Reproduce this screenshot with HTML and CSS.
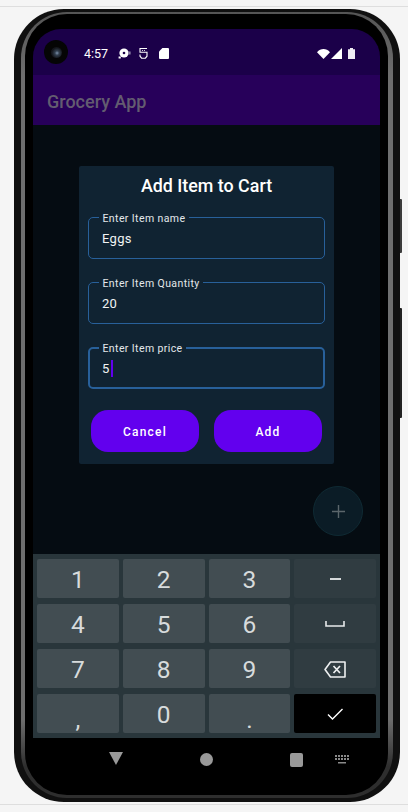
FILE: index.html
```html
<!DOCTYPE html>
<html lang="en">
<head>
    <meta charset="UTF-8">
    <meta name="viewport" content="width=device-width, initial-scale=1.0">
    <title>Grocery App</title>
    <link rel="stylesheet" href="styles.css">
</head>
<body>
    <div class="strip-top"></div>
    <div class="phone">
        <div class="side-btn power"></div>
        <div class="side-btn volume"></div>
        <div class="band">
            <div class="bezel">
                <div class="screen">
                    <div class="status-bar">
                        <div class="camera"><div class="lens"></div></div>
                        <span class="time">4:57</span>
                        <svg class="st-icon icon-bubble" width="13" height="11" viewBox="0 0 13 11"><circle cx="6" cy="5" r="4.6" fill="#fff"/><circle cx="6" cy="5" r="1.3" fill="#1b0049"/><path d="M10 3.5h2.6v3H10z" fill="#8f83a8"/><path d="M0.6 8.4h2.2v2.2H0.6z" fill="#fff"/></svg>
                        <svg class="st-icon icon-sim" width="9" height="12" viewBox="0 0 9 12"><path d="M8 1.5H1v3.7h7v4l-1.6 2H2.6L1 9.2V7.6" fill="none" stroke="#fff" stroke-width="1.1"/><path d="M3.2 3h.8v1h-.8zM5 3h.8v1H5z" fill="#fff"/></svg>
                        <svg class="st-icon icon-sd" width="10" height="11" viewBox="0 0 10 11"><path d="M3.4 0H9a1 1 0 0 1 1 1v9a1 1 0 0 1-1 1H1a1 1 0 0 1-1-1V3.4z" fill="#fff"/></svg>
                        <div class="status-right">
                            <svg width="13" height="10" viewBox="0 0 13 10"><path d="M0 3.2C3.6-1 9.4-1 13 3.2L6.5 10z" fill="#fff"/></svg>
                            <svg class="icon-signal" width="11" height="11" viewBox="0 0 11 11"><path d="M11 0v11H0z" fill="#fff"/></svg>
                            <svg class="icon-battery" width="7" height="11" viewBox="0 0 7 11"><path d="M2 0h3v1.2h2V11H0V1.2h2z" fill="#efedf3"/></svg>
                        </div>
                    </div>
                    <div class="app-bar">Grocery App</div>
                    <div class="content">
                        <div class="dialog">
                            <h2 class="dialog-title">Add Item to Cart</h2>
                            <div class="field">
                                <span class="field-label">Enter Item name</span>
                                <span class="field-value">Eggs</span>
                            </div>
                            <div class="field">
                                <span class="field-label">Enter Item Quantity</span>
                                <span class="field-value">20</span>
                            </div>
                            <div class="field focused">
                                <span class="field-label">Enter Item price</span>
                                <span class="field-value">5<i class="caret"></i></span>
                            </div>
                            <div class="dialog-actions">
                                <button class="btn">Cancel</button>
                                <button class="btn">Add</button>
                            </div>
                        </div>
                        <div class="fab">
                            <svg width="13" height="13" viewBox="0 0 13 13"><path d="M6.5 0v13M0 6.5h13" stroke="#5b666b" stroke-width="1.4"/></svg>
                        </div>
                    </div>
                    <div class="keyboard">
                        <div class="key">1</div>
                        <div class="key">2</div>
                        <div class="key">3</div>
                        <div class="key func"><svg width="11" height="2" viewBox="0 0 11 2"><path d="M0 0h11v2H0z" fill="#d5d9da"/></svg></div>
                        <div class="key">4</div>
                        <div class="key">5</div>
                        <div class="key">6</div>
                        <div class="key func"><svg width="20" height="6" viewBox="0 0 20 6"><path d="M1 0v5h18V0" fill="none" stroke="#e6e9ea" stroke-width="1.6"/></svg></div>
                        <div class="key">7</div>
                        <div class="key">8</div>
                        <div class="key">9</div>
                        <div class="key func"><svg width="22" height="17" viewBox="0 0 22 17"><path d="M6.5 1H21v15H6.500L1 8.500z" fill="none" stroke="#eef0f1" stroke-width="1.6" stroke-linejoin="round"/><path d="M9.500 5l6.500 7M16 5l-6.500 7" stroke="#eef0f1" stroke-width="1.7"/></svg></div>
                        <div class="key low">,</div>
                        <div class="key">0</div>
                        <div class="key low">.</div>
                        <div class="key done"><svg width="16" height="12" viewBox="0 0 16 12"><path d="M1 6.500l4.500 4.500L15.500 1" fill="none" stroke="#fff" stroke-width="1.400"/></svg></div>
                    </div>
                    <div class="nav-bar">
                        <svg class="nav-back" width="14" height="13" viewBox="0 0 14 13"><path d="M0 0h14L7 13z" fill="#999"/></svg>
                        <div class="nav-home"></div>
                        <div class="nav-recent"></div>
                        <svg class="nav-kb" width="14" height="9" viewBox="0 0 14 9"><path d="M0 0h2v2H0zM3 0h2v2H3zM6 0h2v2H6zM9 0h2v2H9zM12 0h2v2h-2zM0 3h2v2H0zM3 3h2v2H3zM6 3h2v2H6zM9 3h2v2H9zM12 3h2v2h-2zM3 7h8v1.500H3z" fill="#8a8a8a"/></svg>
                    </div>
                </div>
            </div>
        </div>
    </div>
    <div class="strip-bottom"></div>
</body>
</html>
```

FILE: styles.css
```css
* {
    box-sizing: border-box;
}
html, body {
    height: 812px;
}
body {
    margin: 0;
    background-color: #f5f5f5;
    font-family: Roboto, sans-serif;
    overflow: hidden;
}
.strip-top {
    height: 7px;
    border-bottom: 1px solid #dedede;
}
.strip-bottom {
    margin-top: 2px;
    height: 8px;
    border-top: 1px solid #dedede;
}

/* device frame */
.phone {
    position: relative;
    width: 386px;
    height: 793px;
    margin: 2px 0 0 14px;
    padding: 3px 7px 4px 7px;
    background-color: #101010;
    border-radius: 50px;
}
.side-btn {
    position: absolute;
    left: 386px;
    width: 2px;
    background-color: #222;
    border-radius: 0 1px 1px 0;
}
.power {
    top: 190px;
    height: 54px;
    background-color: #3c3c3c;
}
.volume {
    top: 299px;
    height: 110px;
}
.band {
    height: 100%;
    padding: 2px 5px 3px 4px;
    background: linear-gradient(#555, #6e6e6e 8%, #6e6e6e 90%, #2e2e2e 96%);
    border-radius: 46px;
}
.bezel {
    height: 100%;
    padding: 15px 8px 0 8px;
    background-color: #000;
    border-radius: 42px;
}
.screen {
    display: flex;
    flex-direction: column;
    height: 100%;
    border-radius: 28px 28px 0 0;
    overflow: hidden;
}

/* status + app bar */
.status-bar {
    display: flex;
    align-items: center;
    height: 46px;
    flex-shrink: 0;
    padding: 2px 25px 0 11px;
    background-color: #1b0049;
    color: white;
}
.camera {
    display: flex;
    align-items: center;
    justify-content: center;
    width: 24px;
    height: 24px;
    margin-top: -2px;
    background-color: #050505;
    border-radius: 50%;
}
.lens {
    width: 11px;
    height: 11px;
    background: radial-gradient(circle at 55% 55%, #7e93ad 0, #33404f 25%, #14161c 60%);
    border-radius: 50%;
}
.time {
    margin-left: 16px;
    font-size: 12.500px;
}
.st-icon {
    display: block;
}
.icon-bubble {
    margin-left: 10px;
}
.icon-sim {
    margin-left: 8px;
}
.icon-sd {
    margin-left: 11px;
}
.status-right {
    display: flex;
    align-items: flex-end;
    margin-left: auto;
}
.icon-signal {
    margin-left: 1px;
}
.icon-battery {
    margin-left: 6px;
}
.app-bar {
    display: flex;
    align-items: center;
    height: 50px;
    flex-shrink: 0;
    padding: 2px 0 0 14px;
    background-color: #27005a;
    color: #635c70;
    font-size: 18px;
    font-weight: 500;
}

/* main area */
.content {
    position: relative;
    height: 429px;
    flex-shrink: 0;
    padding: 41px 46px 0 46px;
    background-color: #050c12;
}
.dialog {
    height: 298px;
    padding: 0 9px;
    background-color: #102332;
    border-radius: 2px;
}
.dialog-title {
    margin: 0;
    padding-top: 9px;
    height: 51px;
    color: white;
    font-size: 17.850px;
    font-weight: 500;
    line-height: 21px;
    text-align: center;
}
.field {
    position: relative;
    display: flex;
    align-items: center;
    height: 42px;
    margin-bottom: 23px;
    padding: 0 13px;
    border: 1px solid #28609a;
    border-radius: 5px;
}
.field.focused {
    border: 2px solid #28609a;
    padding-left: 12px;
}
.field-label {
    position: absolute;
    top: -6px;
    left: 10px;
    padding: 0 3.5px;
    background-color: #102332;
    color: #e3e7ea;
    font-size: 10.500px;
    line-height: 13px;
    letter-spacing: 0.4px;
}
.focused .field-label {
    left: 9px;
    top: -7px;
}
.field-value {
    display: flex;
    align-items: center;
    color: #f1f3f4;
    font-size: 13px;
    letter-spacing: 0.3px;
}
.caret {
    display: block;
    width: 2px;
    height: 17px;
    margin-left: 1px;
    background-color: #6200ee;
}
.dialog-actions {
    display: flex;
    justify-content: space-between;
    padding: 0 3px;
    margin-top: -2px;
}
.btn {
    width: 108px;
    height: 42px;
    padding: 1px 0 0 0;
    background-color: #6200ee;
    color: white;
    border: none;
    border-radius: 17px;
    font-family: Roboto, sans-serif;
    font-size: 12px;
    font-weight: 500;
    letter-spacing: 1.200px;
}
.fab {
    position: absolute;
    left: 280px;
    top: 361px;
    display: flex;
    align-items: center;
    justify-content: center;
    width: 50px;
    height: 50px;
    background-color: #0b1c26;
    border: 1px solid #0f2a33;
    border-radius: 50%;
}

/* number keyboard */
.keyboard {
    display: grid;
    grid-template-columns: repeat(4, 1fr);
    grid-auto-rows: 39px;
    gap: 6px 4px;
    height: 184px;
    flex-shrink: 0;
    padding: 5px 4px;
    background-color: #29363b;
}
.key {
    display: flex;
    align-items: center;
    justify-content: center;
    padding-top: 1px;
    background-color: #424d52;
    color: #d7dbdc;
    border-radius: 2px;
    font-size: 24.500px;
}
.key.low {
    padding-top: 12px;
}
.key.func {
    background-color: #303c41;
}
.key.done {
    background-color: #000;
}

/* nav */
.nav-bar {
    position: relative;
    flex: 1;
}
.nav-bar > * {
    position: absolute;
}
.nav-back {
    left: 76px;
    top: 14px;
}
.nav-home {
    left: 167px;
    top: 15px;
    width: 13px;
    height: 13px;
    background-color: #999;
    border-radius: 50%;
}
.nav-recent {
    left: 257px;
    top: 15px;
    width: 13px;
    height: 14px;
    background-color: #999;
    border-radius: 2px;
}
.nav-kb {
    left: 302px;
    top: 17px;
}
```
